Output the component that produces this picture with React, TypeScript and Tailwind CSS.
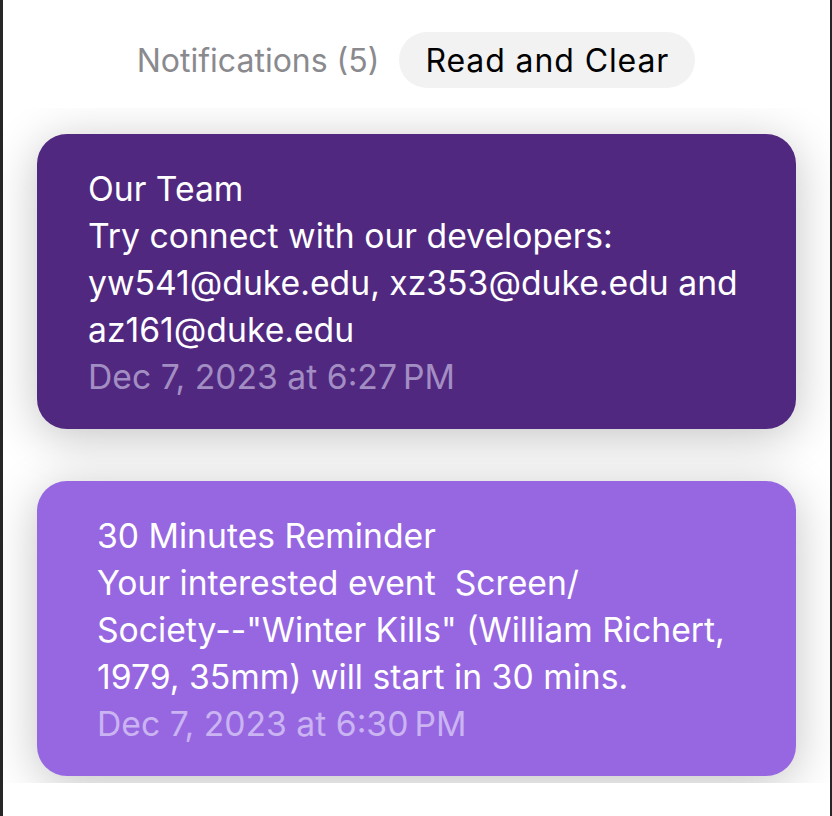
import React from "react";

type Notice = {
  title: string;
  lines: string[];
  date: string;
  bg: string;
  dateColor: string;
  pad: string;
};

const notices: Notice[] = [
  {
    title: "Our Team",
    lines: [
      "Try connect with our developers:",
      "yw541@duke.edu, xz353@duke.edu and",
      "az161@duke.edu",
    ],
    date: "Dec 7, 2023 at 6:27\u2009PM",
    bg: "bg-[#51287f]",
    dateColor: "text-[#a38ec4]",
    pad: "pl-[51px]",
  },
  {
    title: "30 Minutes Reminder",
    lines: [
      "Your interested event  Screen/",
      'Society--"Winter Kills" (William Richert,',
      "1979, 35mm) will start in 30 mins.",
    ],
    date: "Dec 7, 2023 at 6:30\u2009PM",
    bg: "bg-[#9767e2]",
    dateColor: "text-[#cab4f1]",
    pad: "pl-[60px]",
  },
];

function NoticeCard({ n }: { n: Notice }) {
  return (
    <div
      className={`${n.bg} ${n.pad} rounded-[30px] pt-[31px] pb-[29px] text-[33.7px] leading-[47px] text-white shadow-[0_8px_48px_rgba(0,0,0,0.24)]`}
    >
      <div className="whitespace-pre">{n.title}</div>
      {n.lines.map((l) => (
        <div key={l} className="whitespace-pre">
          {l}
        </div>
      ))}
      <div className={`${n.dateColor} whitespace-pre`}>{n.date}</div>
    </div>
  );
}

export default function App() {
  return (
    <div
      className="w-[832px] h-[816px] bg-white flex flex-col border-l-[3px] border-r-[2px] border-[#262626]"
      style={{ fontFamily: "Inter, 'Noto Sans', sans-serif" }}
    >
      <div className="h-[108px] flex justify-center items-start pt-[32px] gap-[20px] pr-[1px]">
        <span className="text-[32px] leading-[57px] text-[#8a8a8e]">
          Notifications (5)
        </span>
        <button className="h-[56px] px-[26px] rounded-full bg-[#f2f2f2] text-[32px] leading-[57px] text-black tracking-[0.9px]">
          Read and Clear
        </button>
      </div>
      <div className="h-[675px] overflow-hidden bg-white flex flex-col gap-[52px] px-[34px] pt-[26px]">
        {notices.map((n) => (
          <NoticeCard key={n.title} n={n} />
        ))}
      </div>
    </div>
  );
}
